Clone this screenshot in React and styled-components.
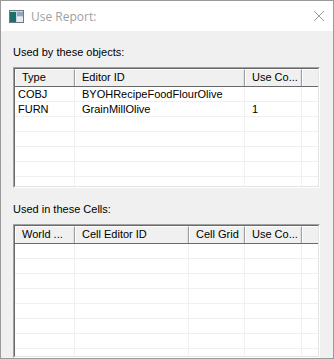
import React from 'react';
import styled, { createGlobalStyle } from 'styled-components';

const Global = createGlobalStyle`
  html, body { margin: 0; padding: 0; background: #ffffff; }
  body { font-family: "Liberation Sans", Arial, sans-serif; }
`;

const Window = styled.div`
  width: 334px;
  height: 359px;
  box-sizing: border-box;
  border: 1px solid #9a9a9a;
  background: #f0f0f0;
  display: flex;
  flex-direction: column;
`;

const TitleBar = styled.div`
  height: 30px;
  background: #ffffff;
  display: flex;
  align-items: center;
  padding: 0 8px 0 8px;
  flex-shrink: 0;
`;

const Title = styled.span`
  flex: 1;
  margin-left: 7px;
  font-family: "Open Sans", "Liberation Sans", sans-serif;
  font-size: 12px;
  color: #a0a0a0;
`;

const Body = styled.div`
  flex: 1;
  padding: 14px 12px 0 12px;
  display: flex;
  flex-direction: column;
`;

const Label = styled.div`
  font-size: 11px;
  color: #000;
  height: 15px;
  line-height: 15px;
  margin-bottom: 7px;
`;

const ListBox = styled.div`
  height: ${p => p.$h}px;
  box-sizing: border-box;
  border-top: 1px solid #a0a0a0;
  border-left: 1px solid #a0a0a0;
  border-right: 1px solid #ffffff;
  border-bottom: 1px solid #ffffff;
  margin-right: 1px;
  margin-bottom: ${p => p.$mb}px;
  display: flex;
`;

const ListInner = styled.div`
  flex: 1;
  border-top: 1px solid #696969;
  border-left: 1px solid #696969;
  border-right: 1px solid #e3e3e3;
  border-bottom: 1px solid #e3e3e3;
  background: #ffffff;
  overflow: hidden;
`;

const Table = styled.div`
  display: flex;
  flex-direction: column;
  height: 100%;
`;

const HeaderRow = styled.div`
  display: flex;
  height: 17px;
  flex-shrink: 0;
  background: #f0f0f0;
  border-bottom: 1px solid #696969;
`;

const HeaderCell = styled.div`
  width: ${p => p.$w}px;
  flex-shrink: 0;
  box-sizing: border-box;
  height: 17px;
  line-height: 15px;
  font-size: 11px;
  padding-left: 6px;
  white-space: nowrap;
  overflow: hidden;
  border-top: 1px solid #ffffff;
  border-left: 1px solid #ffffff;
  border-right: 1px solid #a0a0a0;
  box-shadow: inset -1px 0 0 #e3e3e3;
  color: #000;
`;

const HeaderFill = styled.div`
  flex: 1;
  border-top: 1px solid #ffffff;
  border-left: 1px solid #ffffff;
`;

const Row = styled.div`
  display: flex;
  height: 14px;
  flex-shrink: 0;
  border-bottom: 1px solid #f0f0f0;
`;

const Cell = styled.div`
  width: ${p => p.$w}px;
  flex-shrink: 0;
  box-sizing: border-box;
  height: 14px;
  line-height: 14px;
  font-size: 11px;
  padding-left: ${p => (p.$first ? 3 : 7)}px;
  white-space: nowrap;
  overflow: hidden;
  border-right: 1px solid #f0f0f0;
  color: #000;
`;

const AppIcon = () => (
  <svg width="15" height="13" viewBox="0 0 15 13">
    <rect x="0.5" y="0.5" width="14" height="12" fill="#cfd6dc" stroke="#6b7a86" />
    <rect x="1" y="2" width="6" height="10" fill="#1d6f6a" />
    <rect x="8" y="2" width="6" height="4" fill="#8ea8c0" />
    <rect x="8" y="7" width="6" height="5" fill="#e8ecef" />
  </svg>
);

const CloseIcon = () => (
  <svg width="12" height="12" viewBox="0 0 12 12">
    <path d="M1 1 L11 11 M11 1 L1 11" stroke="#9a9a9a" strokeWidth="1" />
  </svg>
);

const objCols = [
  { name: 'Type', w: 60 },
  { name: 'Editor ID', w: 170 },
  { name: 'Use Co...', w: 57 },
];

const objRows = [
  ['COBJ', 'BYOHRecipeFoodFlourOlive', ''],
  ['FURN', 'GrainMillOlive', '1'],
];

const cellCols = [
  { name: 'World ...', w: 60 },
  { name: 'Cell Editor ID', w: 114 },
  { name: 'Cell Grid', w: 56 },
  { name: 'Use Co...', w: 57 },
];

const ListView = ({ cols, rows, count, h, mb }) => {
  const all = [...rows];
  while (all.length < count) all.push(cols.map(() => ''));
  return (
    <ListBox $h={h} $mb={mb}>
      <ListInner>
        <Table>
          <HeaderRow>
            {cols.map(c => (
              <HeaderCell key={c.name} $w={c.w}>{c.name}</HeaderCell>
            ))}
            <HeaderFill />
          </HeaderRow>
          {all.map((r, i) => (
            <Row key={i}>
              {cols.map((c, j) => (
                <Cell key={j} $w={c.w} $first={j === 0}>{r[j]}</Cell>
              ))}
            </Row>
          ))}
        </Table>
      </ListInner>
    </ListBox>
  );
};

export default function App() {
  return (
    <>
      <Global />
      <Window>
        <TitleBar>
          <AppIcon />
          <Title>Use Report:</Title>
          <CloseIcon />
        </TitleBar>
        <Body>
          <Label>Used by these objects:</Label>
          <ListView cols={objCols} rows={objRows} count={8} h={121} mb={14} />
          <Label>Used in these Cells:</Label>
          <ListView cols={cellCols} rows={[]} count={9} h={134} mb={0} />
        </Body>
      </Window>
    </>
  );
}
